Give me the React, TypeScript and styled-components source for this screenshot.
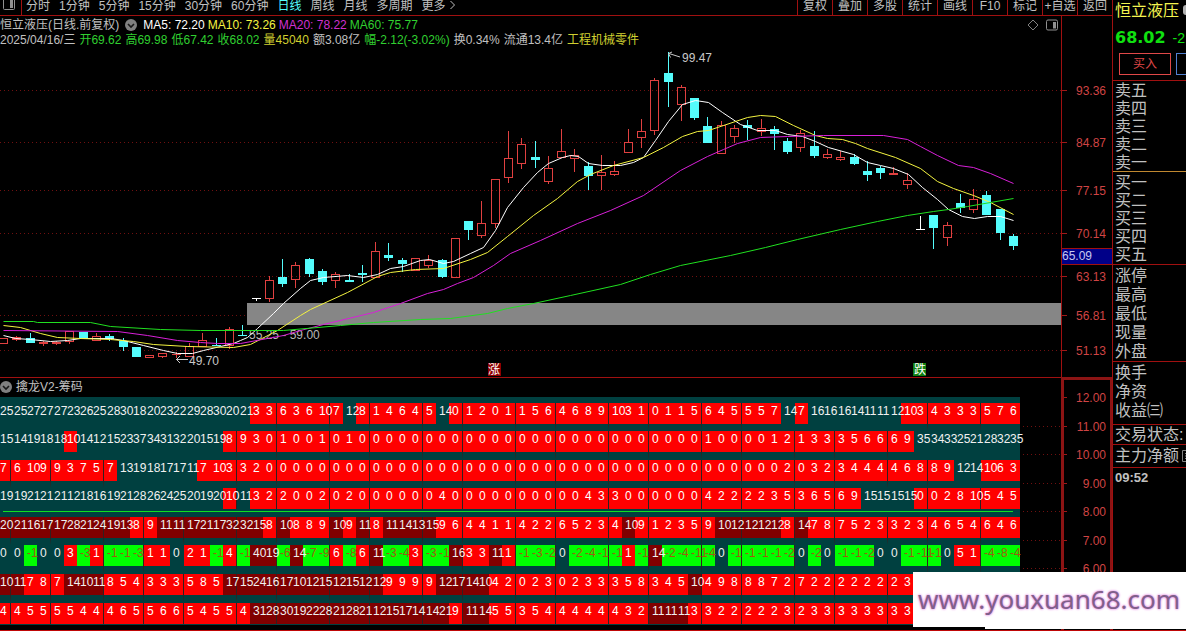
import React from "react";
import styled, { createGlobalStyle } from "styled-components";

const SANS = `"Liberation Sans", "Noto Sans CJK SC", sans-serif`;
const RED = "#a01010";
const CYAN = "#54fcfc";

const GlobalStyle = createGlobalStyle`
  * { box-sizing: border-box; }
  body { margin: 0; background: #000; color: #c0c0c0; font: 12px/14px ${SANS}; }
  button { font: inherit; color: inherit; background: none; border: 0; padding: 0; white-space: nowrap; }
`;

const Screen = styled.div`
  display: flex;
  flex-direction: column;
  min-height: 100vh;
  position: relative;
  overflow: hidden;
  border-bottom: 1px solid #c00808;
`;

const Workspace = styled.div`
  display: flex;
  flex: 1;
`;

const ChartColumn = styled.main`
  flex: 1;
  min-width: 0;
  display: flex;
  flex-direction: column;
`;

const Toolbar = styled.nav`
  display: flex;
  justify-content: space-between;
  height: 16px;
  overflow: hidden;
  border-bottom: 1px solid ${RED};
`;

const PeriodGroup = styled.div`
  display: flex;
  gap: 9px;
`;

const LayoutButton = styled.button`
  width: 22px;
  height: 15px;
  border-right: 1px solid ${RED};
  margin-right: -5px;
  svg { display: block; }
`;

const PeriodButton = styled.button<{ $active?: boolean }>`
  height: 12px;
  line-height: 12px;
  color: ${(p) => (p.$active ? CYAN : "#c0c0c0")};
`;

const ToolGroup = styled.div`
  display: flex;
`;

const ToolButton = styled.button`
  width: 35px;
  height: 15px;
  line-height: 12px;
  padding-bottom: 3px;
  border-left: 1px solid ${RED};
`;

const Section = styled.section<{ $grow?: boolean }>`
  display: flex;
  flex: ${(p) => (p.$grow ? "1" : "none")};
`;

const Plot = styled.div<{ $line?: boolean }>`
  flex: 1;
  min-width: 0;
  overflow: hidden;
  border-top: ${(p) => (p.$line ? `1px solid ${RED}` : "0")};
  svg { display: block; }
`;

const InfoLine = styled.div<{ $gap: number }>`
  display: flex;
  align-items: center;
  gap: ${(p) => p.$gap}px;
  height: 15px;
  white-space: nowrap;
`;

const InfoBlock = styled.header`
  height: 30px;
  padding-top: 1px;
`;

const Tone = styled.span<{ $c: string }>`
  color: ${(p) => p.$c};
`;

const CornerIcons = styled.div`
  display: flex;
  gap: 7px;
  margin-left: auto;
  padding-right: 3px;
`;

const Axis = styled.aside<{ $selected?: boolean }>`
  width: 51px;
  flex: none;
  border-left: ${(p) => (p.$selected ? `3px solid #8c1414` : `1px solid ${RED}`)};
  border-top: ${(p) => (p.$selected ? "3px solid #8c1414" : "0")};
  border-right: ${(p) => (p.$selected ? "2px solid #8c1414" : "0")};
  svg { display: block; }
`;

const SubHeader = styled.div`
  display: flex;
  align-items: center;
  gap: 4px;
  height: 19px;
  padding-bottom: 2px;
`;

const HeatLine = styled.div`
  display: flex;
  align-items: flex-start;
`;

const HeatBox = styled.div`
  flex: none;
  background: #004040;
  padding: 6px 0 1px;
`;

const HeatTable = styled.table`
  table-layout: fixed;
  border-spacing: 0;
  margin-left: -3px;
  width: 1023px;
`;

const HeatCell = styled.td<{ $bg: string; $fg: string; $gap: number; $seam: boolean }>`
  height: ${(p) => 21 + p.$gap}px;
  padding: 0 0 0 3px;
  vertical-align: top;
  white-space: nowrap;
  font-size: 12px;
  line-height: 17px;
  background: ${(p) => p.$bg};
  color: ${(p) => p.$fg};
  border-bottom: ${(p) => p.$gap}px solid #004040;
  border-right: ${(p) => (p.$seam ? "1px solid #302020" : "0")};
`;

const HeatDivider = styled.div`
  height: 1px;
  margin: 2px 7px 5px 3px;
  background: #10e020;
`;

const GridFill = styled.div`
  flex: 1;
  min-width: 0;
`;

const Quote = styled.aside`
  width: 74px;
  flex: none;
  overflow: hidden;
  white-space: nowrap;
  border-left: 1px solid ${RED};
  font-size: 16px;
  svg { flex: none; }
`;

const QuoteName = styled.div`
  display: flex;
  align-items: center;
  gap: 4px;
  height: 22px;
  line-height: 20px;
  padding-left: 2px;
  color: #f4f450;
  svg { margin-bottom: 2px; }
`;

const QuotePrice = styled.div`
  display: flex;
  align-items: center;
  gap: 7px;
  height: 31px;
  padding-left: 2px;
  color: #10e010;
  font-size: 14px;
  strong { font: bold 16px/20px "DejaVu Sans", sans-serif; }
`;

const TradeRow = styled.div`
  display: flex;
  gap: 5px;
  height: 28px;
  padding-left: 6px;
  border-bottom: 1px solid ${RED};
`;

const TradeButton = styled.button<{ $c: string }>`
  flex: none;
  width: 52px;
  height: 22px;
  font-size: 12px;
  line-height: 18px;
  border: 1px solid ${(p) => p.$c};
  color: ${(p) => p.$c};
`;

const QuoteGroup = styled.ul<{ $row: number; $top?: number; $bottom?: number; $line: string; $low?: boolean }>`
  list-style: none;
  margin: 0;
  padding: ${(p) => p.$top ?? 0}px 0 ${(p) => p.$bottom ?? 0}px 2px;
  border-bottom: 1px solid ${(p) => p.$line};
  li {
    display: flex;
    align-items: center;
    gap: 3px;
    height: ${(p) => p.$row}px;
    padding-top: ${(p) => (p.$low ? 2 : 0)}px;
    line-height: 16px;
  }
`;

const Clock = styled.time`
  display: block;
  padding-left: 2px;
  font-size: 13px;
  font-weight: bold;
  line-height: 19px;
`;

const SiteMark = styled.div`
  position: absolute;
  right: 0;
  bottom: 1px;
  width: 273px;
  height: 57px;
  background:
    linear-gradient(#fff, #fff) left top / 100% 55px no-repeat,
    linear-gradient(#fff, #fff) right bottom / 201px 2px no-repeat;
  color: #80608a;
  font: 26px/52px "Noto Sans", sans-serif;
  padding-top: 1px;
  padding-right: 1px;
  text-align: center;
  white-space: nowrap;
  text-shadow: 0 0 2px #e080e0, 0 0 3px #e8a0e8;
`;

const periods = ["分时", "1分钟", "5分钟", "15分钟", "30分钟", "60分钟", "日线", "周线", "月线", "多周期", "更多"];
const tools = ["复权", "叠加", "多股", "统计", "画线", "F10", "标记", "+自选", "返回"];

const averages: [string, string][] = [
  ["MA5: 72.20", "#ffffff"],
  ["MA10: 73.26", "#f4f440"],
  ["MA20: 78.22", "#d030d0"],
  ["MA60: 75.77", "#30d030"],
];

const dayFacts: [string, string][] = [
  ["2025/04/16/三", "#c0c0c0"],
  ["开69.62", "#30d030"],
  ["高69.98", "#30d030"],
  ["低67.42", "#30d030"],
  ["收68.02", "#30d030"],
  ["量45040", "#d0d030"],
  ["额3.08亿", "#c0c0c0"],
  ["幅-2.12(-3.02%)", "#30d030"],
  ["换0.34%", "#c0c0c0"],
  ["流通13.4亿", "#c0c0c0"],
  ["工程机械零件", "#d0d030"],
];

// One entry per trading day: kind, high, body top, body bottom, low.
type Candle = [string, number, number, number, number];
const candles: Candle[] = [
  ["r", 338, 338, 343, 344], ["f", 336, 337, 340, 341], ["c", 333, 338, 343, 343], ["f", 341, 342, 344, 346],
  ["f", 341, 342, 344, 345], ["r", 331, 331, 341, 344], ["c", 332, 332, 339, 339], ["r", 333, 336, 340, 341],
  ["c", 334, 336, 339, 341], ["c", 338, 341, 347, 351], ["c", 347, 347, 357, 357], ["r", 355, 355, 357, 357],
  ["r", 353, 353, 356, 358], ["f", 352, 354, 355, 358], ["r", 343, 346, 356, 357], ["r", 333, 340, 346, 347],
  ["c", 338, 345, 346, 346], ["r", 327, 329, 345, 349], ["c", 325, 335, 335, 336], ["w", 298, 298, 299, 301],
  ["r", 276, 280, 298, 302], ["c", 259, 277, 284, 287], ["r", 262, 265, 279, 288], ["c", 258, 259, 274, 277],
  ["c", 269, 271, 282, 285], ["r", 272, 274, 280, 288], ["c", 274, 280, 282, 282], ["c", 265, 273, 275, 282],
  ["r", 242, 251, 277, 278], ["c", 243, 255, 258, 261], ["c", 258, 260, 264, 272], ["r", 258, 258, 270, 271],
  ["r", 255, 260, 265, 268], ["c", 259, 260, 277, 278], ["r", 238, 238, 277, 278], ["c", 221, 221, 230, 240],
  ["r", 201, 223, 235, 238], ["r", 179, 179, 223, 228], ["r", 131, 158, 177, 183], ["r", 138, 144, 163, 169],
  ["c", 141, 157, 160, 168], ["r", 156, 168, 181, 184], ["r", 129, 151, 157, 158], ["r", 149, 155, 158, 172],
  ["c", 162, 166, 176, 190], ["r", 155, 172, 175, 190], ["r", 161, 171, 174, 176], ["r", 129, 142, 152, 153],
  ["r", 119, 131, 137, 148], ["r", 78, 80, 130, 135], ["c", 52, 73, 82, 107], ["r", 85, 87, 104, 121],
  ["c", 98, 98, 118, 120], ["c", 117, 126, 143, 143], ["r", 121, 125, 153, 154], ["r", 125, 128, 136, 143],
  ["c", 120, 125, 128, 140], ["r", 119, 128, 131, 136], ["c", 126, 129, 134, 150], ["c", 138, 141, 152, 154],
  ["r", 130, 133, 147, 152], ["c", 131, 146, 156, 158], ["r", 149, 154, 157, 159], ["r", 151, 157, 159, 161],
  ["c", 154, 157, 164, 165], ["c", 161, 171, 175, 181], ["c", 166, 168, 173, 179], ["f", 167, 173, 175, 175],
  ["r", 173, 180, 184, 189], ["w", 216, 229, 230, 230], ["c", 215, 215, 228, 249], ["r", 222, 225, 237, 246],
  ["c", 194, 203, 208, 213], ["r", 189, 199, 209, 213], ["c", 191, 195, 215, 215], ["c", 209, 209, 233, 240],
  ["c", 234, 236, 246, 250],
];

const maLines: [string, string][] = [
  ["#ffffff", "3,335 15,338 30,339 50,341 67,340 80,338 110,338 123,340 143,345 163,350 177,353 192,353 203,350 220,346 233,343 240,340 247,337 257,328 273,313 283,303 300,288 310,280 323,277 347,275 363,277 377,274 390,268 403,266 420,260 429,259 443,263 453,261 470,253 483,247 495,230 507,207 523,187 537,172 548,163 562,157 570,155 578,156 588,163 602,165 620,165 633,162 643,157 655,140 668,121 682,104 695,100 708,102 722,112 740,124 757,130 775,130 787,134 802,136 815,141 828,147 853,154 867,162 880,165 893,168 908,174 922,187 937,199 948,209 962,216 974,218 987,216 1000,216 1013,220"],
  ["#f4f440", "3,325 20,327 40,333 57,337 80,338 110,339 133,341 153,344 187,346 233,347 250,344 277,330 300,315 310,309 347,292 377,276 390,272 415,269 443,268 470,259 487,252 507,236 533,215 557,198 577,181 590,174 613,165 643,157 663,147 682,136 697,131 708,130 723,125 747,117 760,115 775,116 793,125 815,135 827,138 842,139 855,143 867,148 895,157 920,168 937,181 953,188 973,195 990,202 1013,214"],
  ["#d820d8", "3,330 117,331 147,335 177,340 200,342 217,343 240,343 267,338 283,335 300,330 323,324 373,312 400,303 427,293 443,289 457,283 473,277 493,265 510,253 540,240 577,223 610,210 643,195 680,170 707,156 723,149 737,143 760,137 787,136 823,135 883,135 907,139 920,146 937,155 958,165 973,167 990,173 1013,183"],
  ["#20e020", "3,321 33,321 37,322 90,322 110,326 160,329 200,330 283,330 340,325 373,322 420,319 450,318 487,313 507,308 533,303 570,295 620,284 650,274 680,265 730,255 765,247 797,239 840,229 877,221 907,215 933,211 948,209 967,206 1013,198"],
];

const priceTicks: [string, number][] = [
  ["93.36", 90], ["84.87", 142], ["77.15", 190], ["70.14", 233], ["63.13", 276], ["56.81", 315], ["51.13", 350],
];
const chipTicks: [string, number][] = [
  ["12.00", 397], ["11.00", 426], ["10.00", 454], ["9.00", 483], ["8.00", 511], ["7.00", 540], ["6.00", 568],
];

const upperRows = [
  "25 25 27 27 27 23 26 25 28 30 18 20 23 22 29 28 30 20 21 3 3 6 3 6 10 7 12 8 1 4 6 4 5 14 0 1 2 0 1 1 5 6 4 6 8 9 10 3 1 0 1 1 5 6 4 5 5 5 7 14 7 16 16 16 14 11 11 12 10 3 4 3 3 3 5 7 6",
  "15 14 19 18 18 10 14 12 15 23 37 34 31 32 20 15 19 8 9 3 0 1 0 0 1 0 1 0 0 0 0 0 0 0 0 0 0 0 0 0 0 0 0 0 0 0 0 0 0 0 0 0 0 1 0 0 0 0 1 2 1 3 3 3 5 6 6 6 9 35 34 33 25 21 28 32 35",
  "7 6 10 9 9 3 7 5 7 13 19 18 17 17 11 7 10 3 3 2 0 0 0 0 0 0 0 0 0 0 0 0 0 0 0 0 0 0 0 0 0 0 0 0 0 0 0 0 0 0 0 0 0 0 0 0 0 0 0 2 0 3 2 3 4 4 4 4 6 8 8 9 12 14 10 6 3",
  "19 19 21 21 21 12 18 16 19 21 28 26 24 25 20 19 20 10 11 3 2 2 0 0 2 0 2 0 0 0 0 0 0 4 0 0 0 0 0 0 0 0 0 0 4 3 3 0 0 0 0 0 0 4 2 2 2 2 3 5 3 6 5 6 9 15 15 15 15 0 0 2 8 10 5 4 5",
];
const lowerRows = [
  "20 21 16 17 17 28 21 24 19 13 8 9 11 11 17 21 17 32 32 15 8 10 8 8 9 10 9 11 8 11 14 13 15 9 6 4 4 1 1 4 2 2 6 5 2 3 4 10 9 1 2 3 5 9 10 12 12 12 12 8 14 7 8 7 5 2 3 3 2 3 4 6 5 4 6 4 6",
  "0 0 -1 0 0 3 -3 1 -1 -1 -3 1 1 0 2 1 -1 4 -1 40 19 -6 14 -7 -9 6 -8 6 11 -3 -4 3 -3 -1 16 3 3 11 1 -1 -3 -2 0 -2 -4 -1 -1 1 -1 14 -2 -4 -11 -4 0 -1 -1 -1 -1 -2 0 -2 0 -1 -1 -2 0 0 -1 -11 -1 0 5 1 -4 -8 -4",
  "10 11 7 8 7 14 10 11 8 5 4 3 3 3 5 8 5 17 15 24 16 17 10 12 15 12 15 12 12 9 9 9 9 12 17 14 10 4 2 0 2 3 0 2 3 3 3 5 8 3 4 5 10 4 9 8 8 8 7 2 7 2 2 2 2 2 2 2 3 2 2 2 2 2 2 2 2",
  "4 4 5 5 5 5 4 4 4 6 5 5 6 6 5 4 5 5 4 31 28 30 19 22 28 21 28 21 12 15 17 14 14 21 9 11 14 5 5 3 5 4 4 4 4 4 4 3 2 11 11 11 3 3 2 2 2 2 2 3 2 3 3 3 3 3 3 3 3 3 3 3 3 3 3 3 3",
];

// Days followed by a one-pixel seam.
const seams = new Set([0, 3, 7, 10, 13, 17, 20, 24, 27, 31, 34, 38, 41, 45, 48, 52, 55, 59, 62, 66, 69, 73]);

function cellTone(v: number, upper: boolean, signed: boolean): [string, string] {
  if (upper) return v > 10 ? ["#004040", "#f0f0f0"] : ["#ff0000", "#ffffff"];
  if (v < 0) return ["#00ff00", "#a05a10"];
  if (v === 0 && signed) return ["#004040", "#f0f0f0"];
  return v >= 10 ? ["#800000", "#f0f0f0"] : ["#ff0000", "#ffffff"];
}

function Heat({ rows, gaps, upper = false }: { rows: string[]; gaps: number[]; upper?: boolean }) {
  return (
    <HeatTable>
      <colgroup>
        {Array.from({ length: 77 }, (_, i) => (
          <col key={i} width={seams.has(i) ? 14 : 13} />
        ))}
      </colgroup>
      <tbody>
        {rows.map((row, r) => (
          <tr key={r}>
            {row.split(" ").map((t, i) => {
              const [bg, fg] = cellTone(Number(t), upper, row.includes("-"));
              return (
                <HeatCell key={i} $bg={bg} $fg={fg} $gap={gaps[r]} $seam={seams.has(i) && bg !== "#004040"}>
                  {t}
                </HeatCell>
              );
            })}
          </tr>
        ))}
      </tbody>
    </HeatTable>
  );
}

function ChevronDot() {
  return (
    <svg width="12" height="12" viewBox="0 0 12 12" aria-hidden="true">
      <circle cx="6" cy="6" r="6" fill="#808080" />
      <path d="M3 5l3 3 3-3" fill="none" stroke="#181818" strokeWidth="1.6" />
    </svg>
  );
}

function PanelIcon() {
  return (
    <svg width="12" height="12" viewBox="0 0 12 12" aria-hidden="true">
      <rect x="0.5" y="1" width="11" height="10" rx="1.5" fill="none" stroke="#909090" />
      <rect x="7" y="3" width="3" height="6.5" fill="#909090" />
    </svg>
  );
}

function CandleMark({ data, index }: { data: Candle; index: number }) {
  const [kind, high, top, bottom, low] = data;
  const x = Math.round(3 + 13.29 * index);
  const color = kind === "c" ? CYAN : kind === "w" ? "#ffffff" : "#e04040";
  const hollow = kind === "r";
  return (
    <g fill={color}>
      {high < top && <rect x={x} y={high} width="1" height={top - high} />}
      {low > bottom && <rect x={x} y={bottom} width="1" height={low - bottom} />}
      {hollow ? (
        <rect x={x - 3.5} y={top + 0.5} width="8" height={Math.max(bottom - top, 1)} fill="none" stroke={color} />
      ) : (
        <rect x={x - 4} y={top} width="9" height={Math.max(bottom - top, 1)} />
      )}
    </g>
  );
}

function PriceChart() {
  return (
    <svg width="100%" height="331" fontSize="12" fontFamily={SANS} role="img" aria-label="日线">
      <g transform="translate(0,-46)">
        {priceTicks.map(([label, y]) => (
          <line key={label} x1="0" x2="100%" y1={y + 0.5} y2={y + 0.5} stroke="#701010" strokeDasharray="1 3" />
        ))}
        <rect x="247" y="303" width="100%" height="22" fill="#868686" />
        {candles.map((c, i) => (
          <CandleMark key={i} data={c} index={i} />
        ))}
        <text x="249" y="339" fill="#b8b8b8">55.25 - 59.00</text>
        {maLines.map(([color, points]) => (
          <polyline key={color} points={points} fill="none" stroke={color} transform="translate(0.5,0.5)" />
        ))}
        <g fill="none" stroke="#c8c8c8">
          <path d="M188 359.5h-12M180 356l-3.500 3.500 3.500 3.500" />
          <path d="M680 57l-11-3.500M672 52l-3.500 1.500 2 4" />
        </g>
        <text x="189" y="365" fill="#c8c8c8">49.70</text>
        <text x="682" y="62" fill="#c8c8c8">99.47</text>
        <rect x="488" y="363" width="13" height="13" fill="#900000" />
        <text x="488" y="374" fontSize="12" fill="#fff">涨</text>
        <rect x="913" y="363" width="13" height="13" fill="#108010" />
        <text x="914" y="374" fontSize="12" fill="#fff">跌</text>
      </g>
    </svg>
  );
}

function PriceAxis() {
  return (
    <svg width="50" height="361" fontSize="12" fontFamily={SANS}>
      <g transform="translate(0,-16)">
        {priceTicks.map(([label, y]) => (
          <g key={label}>
            <line x1="0" x2="5" y1={y + 0.5} y2={y + 0.5} stroke="#a01818" />
            <text x="44" y={y + 5} textAnchor="end" fill="#d04444">{label}</text>
          </g>
        ))}
        <rect x="0" y="248" width="50" height="16" fill="#000088" />
        <line x1="0" x2="50" y1="248.500" y2="248.500" stroke={RED} />
        <line x1="0" x2="50" y1="264.500" y2="264.500" stroke={RED} />
        <text x="0" y="260" fill="#c8c8f0">65.09</text>
      </g>
    </svg>
  );
}

function ChipAxis() {
  return (
    <svg width="46" height="250" fontSize="12" fontFamily={SANS}>
      <g transform="translate(0,-380)">
        {chipTicks.map(([label, y]) => (
          <g key={label}>
            <line x1="0" x2="3" y1={y + 0.5} y2={y + 0.5} stroke="#a01818" />
            <text x="42" y={y + 5} textAnchor="end" fill="#d04444">{label}</text>
          </g>
        ))}
      </g>
    </svg>
  );
}

export default function App() {
  return (
    <Screen>
      <GlobalStyle />
      <Workspace>
        <ChartColumn>
          <Toolbar>
            <PeriodGroup>
              <LayoutButton aria-label="布局">
                <svg width="18" height="15" viewBox="0 0 18 15">
                  <rect x="3.500" y="-1" width="11" height="10.500" rx="1" fill="none" stroke="#909090" />
                  <rect x="10" y="0" width="3" height="8" fill="#909090" />
                </svg>
              </LayoutButton>
              {periods.map((p) => (
                <PeriodButton key={p} $active={p === "日线"}>
                  {p}
                  {p === "更多" && (
                    <svg width="11" height="10" viewBox="0 0 11 10">
                      <path d="M4.500 1l4 4-4 4" fill="none" stroke="#c0c0c0" />
                    </svg>
                  )}
                </PeriodButton>
              ))}
            </PeriodGroup>
            <ToolGroup>
              {tools.map((t) => (
                <ToolButton key={t}>{t}</ToolButton>
              ))}
            </ToolGroup>
          </Toolbar>

          <Section>
            <Plot>
              <InfoBlock>
                <InfoLine $gap={6}>
                  <span>恒立液压(日线.前复权)</span>
                  <ChevronDot />
                  <InfoLine $gap={3}>
                    {averages.map(([t, c]) => (
                      <Tone key={t} $c={c}>{t}</Tone>
                    ))}
                  </InfoLine>
                  <CornerIcons>
                    <svg width="12" height="12" viewBox="0 0 12 12" aria-hidden="true">
                      <path d="M6 1l5 5-5 5-5-5z" fill="none" stroke="#808080" />
                    </svg>
                    <PanelIcon />
                  </CornerIcons>
                </InfoLine>
                <InfoLine $gap={4}>
                  {dayFacts.map(([t, c]) => (
                    <Tone key={t} $c={c}>{t}</Tone>
                  ))}
                </InfoLine>
              </InfoBlock>
              <PriceChart />
            </Plot>
            <Axis>
              <PriceAxis />
            </Axis>
          </Section>

          <Section $grow>
            <Plot $line>
              <SubHeader>
                <ChevronDot />
                <span>擒龙V2-筹码</span>
              </SubHeader>
              <HeatLine>
                <HeatBox>
                  <Heat rows={upperRows} gaps={[7, 8, 7, 0]} upper />
                  <HeatDivider />
                  <Heat rows={lowerRows} gaps={[7, 8, 8, 0]} />
                </HeatBox>
                <GridFill>
                  <svg width="100%" height="228">
                    {chipTicks.slice(1).map(([label, y]) => (
                      <line key={label} x1="3" x2="100%" y1={y - 396.5} y2={y - 396.5} stroke="#701010" strokeDasharray="1 3" />
                    ))}
                  </svg>
                </GridFill>
              </HeatLine>
            </Plot>
            <Axis $selected>
              <ChipAxis />
            </Axis>
          </Section>
        </ChartColumn>

        <Quote>
          <QuoteName>
            恒立液压
            <svg width="12" height="10" viewBox="0 0 12 10" aria-hidden="true">
              <rect width="12" height="10" rx="3" fill="#b0b0b0" />
            </svg>
          </QuoteName>
          <QuotePrice>
            <strong>68.02</strong>
            <span>-2.12</span>
          </QuotePrice>
          <TradeRow>
            <TradeButton $c="#e04848">买入</TradeButton>
            <TradeButton $c="#5080d0">卖出</TradeButton>
          </TradeRow>
          <QuoteGroup $row={18} $line="#c08830" $low>
            <li>卖五</li>
            <li>卖四</li>
            <li>卖三</li>
            <li>卖二</li>
            <li>卖一</li>
          </QuoteGroup>
          <QuoteGroup $row={18} $top={1} $bottom={1} $line={RED} $low>
            <li>买一</li>
            <li>买二</li>
            <li>买三</li>
            <li>买四</li>
            <li>买五</li>
          </QuoteGroup>
          <QuoteGroup $row={19} $bottom={1} $line={RED} $low>
            <li>涨停</li>
            <li>最高</li>
            <li>最低</li>
            <li>现量</li>
            <li>外盘</li>
          </QuoteGroup>
          <QuoteGroup $row={19} $bottom={5} $line={RED} $low>
            <li>换手</li>
            <li>净资</li>
            <li>收益㈢</li>
          </QuoteGroup>
          <QuoteGroup $row={19} $line={RED}>
            <li>交易状态:</li>
          </QuoteGroup>
          <QuoteGroup $row={22} $line={RED}>
            <li>
              主力净额
              <svg width="12" height="12" viewBox="0 0 12 12" aria-hidden="true">
                <path d="M0.500 0.500h11v11h-11zM3 3.500h7M3 6h7M3 8.500h7" fill="none" stroke="#808080" />
              </svg>
            </li>
          </QuoteGroup>
          <Clock>09:52</Clock>
        </Quote>
      </Workspace>
      <SiteMark>www.youxuan68.com</SiteMark>
    </Screen>
  );
}
